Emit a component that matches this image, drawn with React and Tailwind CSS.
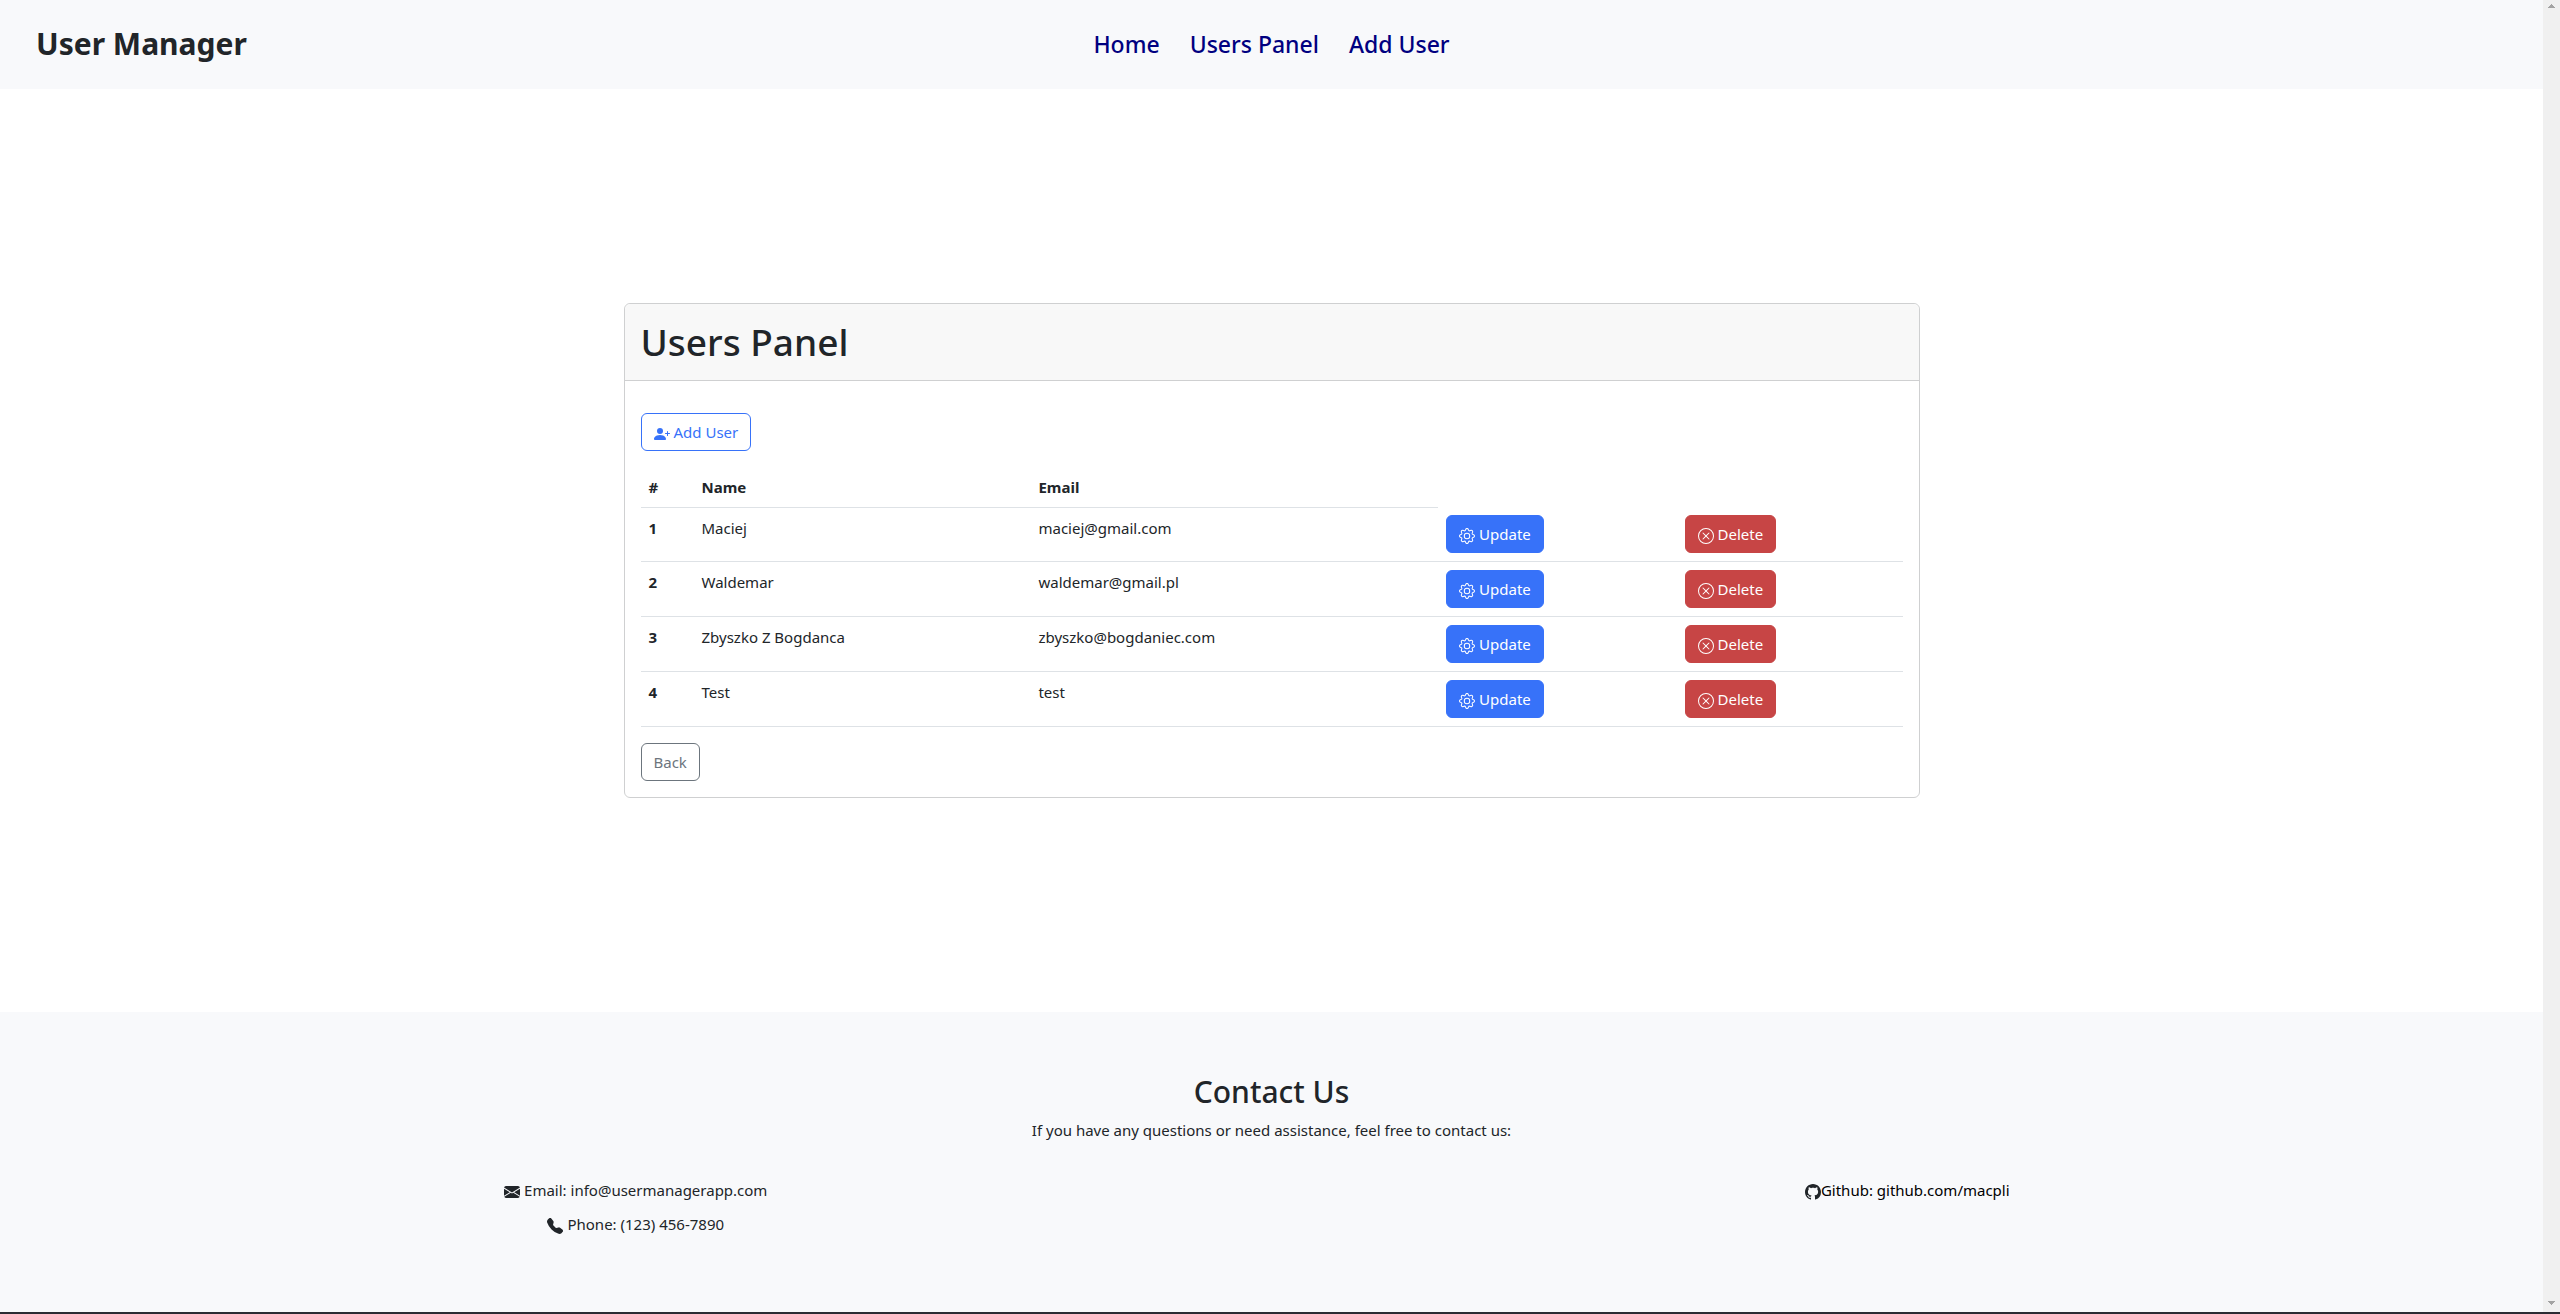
import {
  BsPersonPlusFill,
  BsGear,
  BsXCircle,
  BsEnvelopeFill,
  BsTelephoneFill,
  BsGithub,
} from "react-icons/bs";

const users = [
  { id: 1, name: "Maciej", email: "maciej@gmail.com" },
  { id: 2, name: "Waldemar", email: "waldemar@gmail.pl" },
  { id: 3, name: "Zbyszko Z Bogdanca", email: "zbyszko@bogdaniec.com" },
  { id: 4, name: "Test", email: "test" },
];

const buttonBase =
  "inline-flex h-[38px] items-center gap-1 rounded-md border px-3";

function Header() {
  return (
    <header className="grid h-[89px] grid-cols-[1fr_auto_1fr] items-center bg-[#f8f9fb] px-9 pb-0.5">
      <p className="text-[30px] font-bold">User Manager</p>
      <nav className="flex gap-[30px] text-[23px] font-medium text-[#000080]">
        <a href="#home">Home</a>
        <a href="#users">Users Panel</a>
        <a href="#add">Add User</a>
      </nav>
    </header>
  );
}

function UsersTable() {
  return (
    <table className="w-full table-fixed border-collapse text-left">
      <colgroup>
        <col className="w-[4.2%]" />
        <col className="w-[26.7%]" />
        <col className="w-[32.3%]" />
        <col className="w-[18.9%]" />
        <col className="w-[17.9%]" />
      </colgroup>
      <thead>
        <tr className="font-bold">
          <th scope="col" className="border-b border-[#dee2e6] p-2">#</th>
          <th scope="col" className="border-b border-[#dee2e6] p-2">Name</th>
          <th scope="col" className="border-b border-[#dee2e6] p-2">Email</th>
        </tr>
      </thead>
      <tbody>
        {users.map((user) => (
          <tr key={user.id} className="border-b border-[#dee2e6] align-top">
            <th scope="row" className="p-2 font-bold">{user.id}</th>
            <td className="p-2">{user.name}</td>
            <td className="p-2">{user.email}</td>
            <td className="p-2">
              <button className={`${buttonBase} border-[#3772f9] bg-[#3772f9] text-white`}>
                <BsGear className="mt-1 size-4" />
                Update
              </button>
            </td>
            <td className="p-2">
              <button className={`${buttonBase} border-[#c74545] bg-[#c74545] text-white`}>
                <BsXCircle className="mt-1 size-4" />
                Delete
              </button>
            </td>
          </tr>
        ))}
      </tbody>
    </table>
  );
}

function UsersPanel() {
  return (
    <section className="rounded-md border border-[#cfd0d1] bg-white">
      <div className="rounded-t-md border-b border-[#cfd0d1] bg-[#f8f8f8] px-4 py-3">
        <h1 className="text-[37px] leading-[52px] font-medium">Users Panel</h1>
      </div>
      <div className="flex flex-col items-start gap-4 px-4 pt-8 pb-4">
        <button className={`${buttonBase} border-[#3772f9] text-[#3772f9]`}>
          <BsPersonPlusFill className="mt-1 size-4" />
          Add User
        </button>
        <UsersTable />
        <button className={`${buttonBase} border-[#6c757d] text-[#6c757d]`}>Back</button>
      </div>
    </section>
  );
}

function Footer() {
  return (
    <footer className="h-[300px] bg-[#f8f9fb] pt-[60px] text-center">
      <h2 className="text-[30px] leading-[40px] font-medium">Contact Us</h2>
      <p className="mt-1.5 leading-6">
        If you have any questions or need assistance, feel free to contact us:
      </p>
      <div className="mt-9 grid grid-cols-2">
        <address className="flex flex-col items-center gap-[10px] leading-6 not-italic">
          <p className="flex items-center gap-1">
            <BsEnvelopeFill className="mt-1 size-4" />
            Email: info@usermanagerapp.com
          </p>
          <p className="flex items-center gap-1">
            <BsTelephoneFill className="mt-1 size-4" />
            Phone: (123) 456-7890
          </p>
        </address>
        <p className="flex items-center justify-center self-start leading-6">
          <BsGithub className="mt-1 size-4" />
          <a href="https://github.com/macpli" className="text-black">Github: github.com/macpli</a>
        </p>
      </div>
    </footer>
  );
}

function ScrollTrack() {
  return (
    <div className="flex w-[17px] shrink-0 flex-col items-center justify-between bg-[#f0f0f0] py-1" aria-hidden="true">
      <svg width="7" height="4" viewBox="0 0 7 4" fill="#a3a3a3" shapeRendering="crispEdges">
        <path d="M3 0h1v1h1v1h1v1h1v1H0V3h1V2h1V1h1z" />
      </svg>
      <svg width="7" height="4" viewBox="0 0 7 4" fill="#a3a3a3" shapeRendering="crispEdges" className="mb-[3px]">
        <path d="M0 0h7v1H6v1H5v1H4v1H3V3H2V2H1V1H0z" />
      </svg>
    </div>
  );
}

export default function App() {
  return (
    <div className="flex min-h-screen flex-col border-b-2 border-[#2b2c33] bg-white font-['Noto_Sans','Open_Sans',sans-serif] text-[15px] leading-6 text-[#212529]">
      <div className="flex flex-1">
        <div className="flex flex-1 flex-col">
          <Header />
          <main className="mx-auto flex w-full max-w-[1320px] flex-1 flex-col justify-center px-3">
            <UsersPanel />
          </main>
          <Footer />
        </div>
        <ScrollTrack />
      </div>
    </div>
  );
}
